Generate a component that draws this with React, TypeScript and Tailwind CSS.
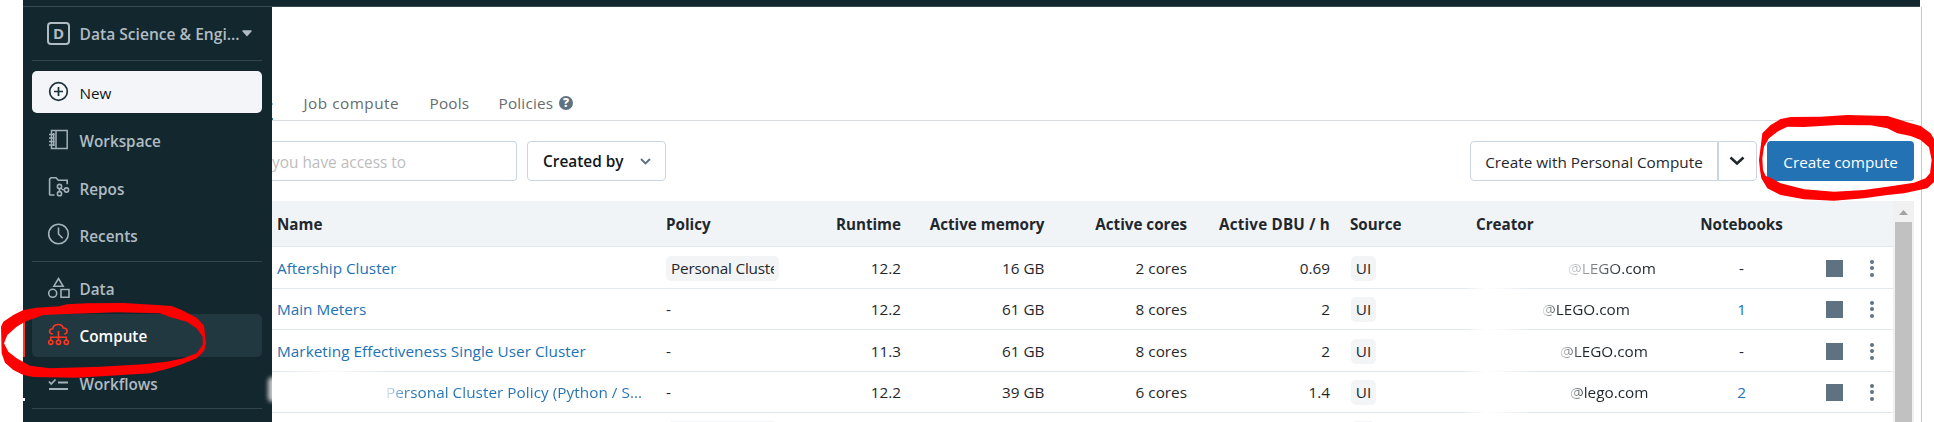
import React from "react";

type Variant = "normal" | "new" | "active";

function NavItem({ label, icon, variant = "normal", className = "" }: { label: string; icon: React.ReactNode; variant?: Variant; className?: string }) {
  const bg = variant === "new" ? "bg-[#f3f5f8]" : variant === "active" ? "bg-[#223840]" : "";
  const ink = variant === "new" ? "text-[#11171c] font-medium" : variant === "active" ? "text-white font-semibold" : "text-[#b0bcc3] font-semibold";
  const iconInk = variant === "new" ? "text-[#1b3139]" : variant === "active" ? "text-[#ff3621]" : "text-[#a3b1b8]";
  return (
    <div className={`mr-[10px] ml-[9px] flex shrink-0 items-center rounded-[5px] pl-[15px] ${bg} ${className}`}>
      <svg className={`h-6 w-6 shrink-0 overflow-visible ${iconInk}`} viewBox="0 0 24 24" fill="none" stroke="currentColor" strokeWidth="1.6">
        {icon}
      </svg>
      <span className={`ml-[8.5px] pt-[3px] text-[15.3px] leading-none whitespace-nowrap ${ink}`}>{label}</span>
    </div>
  );
}

const icons = {
  add: <><circle cx="11.5" cy="11.5" r="8.8" strokeWidth="1.7" /><path d="M11.500 7v9M7 11.500h9" strokeWidth="1.7" /></>,
  workspace: <><path d="M4.500 2.500h15.700v18H4.500zM9 2.500v18M6.700 5v13" strokeWidth="1.500" /><path d="M2 6.500h5.500M2 10h5.500M2 13.500h5.500M2 17h5.500" strokeWidth="1.400" /></>,
  repos: <><path d="M7.500 19H3.200Q2.600 19 2.600 18.400V3.200L4 1.800h5l2.300 2.500h8.900v4" /><circle cx="12.500" cy="10.500" r="2.100" /><circle cx="12.500" cy="17.700" r="2.100" /><circle cx="19.500" cy="14" r="2.100" /><path d="M12.500 12.600v3M14 12c.8 1.600 2 2 3.400 2" /></>,
  recents: <><circle cx="11.500" cy="10" r="9.800" /><path d="M11.500 3.500v6.500l4.200 4.200" /></>,
  data: <><path d="M11.500 1.500l4.600 7.700H6.900z" /><circle cx="5.700" cy="16.300" r="4" /><path d="M14 12.500h8v7.700h-8z" /></>,
  compute: <><path d="M5.800 10C1.200 10 1.800 4.800 5.800 4.800C6.500 -0.700 15 -0.700 16.200 4C21.500 4.300 21 10 17.200 10" /><path d="M11.500 7v9M3.800 16v-2.800h15.500V16" /><circle cx="3.800" cy="18.300" r="2.100" /><circle cx="11.500" cy="18.300" r="2.100" /><circle cx="19.300" cy="18.300" r="2.100" /></>,
  workflows: <path d="M2 9.500l2.200 2.500l4.300-4.500M11 10.500h10M2 17h19" strokeWidth="1.800" />,
};

type Row = { h: string; name: string; nameStyle: string; policy?: string; rt: string; mem: string; cores: string; dbu: string; indent: string; domain: string; fade: string; nb: string };

const link = "text-[#2272b4]";

const rows: Row[] = [
  { h: "h-[42px] pt-px", name: "Aftership Cluster", nameStyle: link, policy: "Personal Cluste", rt: "12.2", mem: "16 GB", cores: "2 cores", dbu: "0.69", indent: "pl-[92px]", domain: "@LEGO.com", fade: "from-[#dcdcde] to-[#1f272d] to-65%", nb: "-" },
  { h: "h-[41px]", name: "Main Meters", nameStyle: link, rt: "12.2", mem: "61 GB", cores: "8 cores", dbu: "2", indent: "pl-[66px]", domain: "@LEGO.com", fade: "from-[#efeff0] to-[#1f272d] to-20%", nb: "1" },
  { h: "h-[42px] pt-px", name: "Marketing Effectiveness Single User Cluster", nameStyle: `${link} tracking-[0.04px]`, rt: "11.3", mem: "61 GB", cores: "8 cores", dbu: "2", indent: "pl-[84px]", domain: "@LEGO.com", fade: "from-[#d8d9db] to-[#1f272d] to-25%", nb: "-" },
  { h: "h-[41px]", name: "Personal Cluster Policy (Python / S...", nameStyle: "ml-[109px] bg-linear-to-r from-[#d9e6f1] to-[#2272b4] to-8% bg-clip-text text-transparent tracking-[0.04px]", rt: "12.2", mem: "39 GB", cores: "6 cores", dbu: "1.4", indent: "pl-[94px]", domain: "@lego.com", fade: "from-[#d0d2d4] to-[#1f272d] to-20%", nb: "2" },
];

const cols = "grid shrink-0 grid-cols-[390px_120px_114px_143.5px_142.5px_143px_20px_126px_200px_131px_60px_70px] whitespace-nowrap";

export default function App() {
  return (
    <div className="relative flex h-[422px] w-[1934px] flex-col overflow-hidden bg-white pl-[23px] font-['Open_Sans','Noto_Sans',sans-serif] text-[15.3px] text-[#1f272d]">
      <div className="h-[7px] w-[1897px] shrink-0 border-b border-[#3a4a52] bg-[#13272e]" />
      <div className="flex min-h-0 flex-1">
        <aside className="relative flex w-[249px] shrink-0 flex-col overflow-hidden bg-[#13272e]">
          <div className="mr-[10px] ml-[9px] flex h-[54px] shrink-0 items-center border-b border-[#34464d] pl-[15px]">
            <div className="mb-[1px] flex h-[23px] w-[23px] shrink-0 items-center justify-center rounded-[4px] border-2 border-[#b0bcc3] text-[15px] leading-none font-bold text-[#b0bcc3]">D</div>
            <span className="ml-[9.5px] w-[159.5px] pt-[3px] text-[15.6px] leading-none font-semibold whitespace-nowrap text-[#b0bcc3]">Data Science &amp; Engi...</span>
            <svg className="mb-[1px] ml-[3px] h-[7px] w-[10px] shrink-0 text-[#b0bcc3]" viewBox="0 0 10 7"><path d="M0.500 0.300h9v1.200L5 6.500L0.500 1.500z" fill="currentColor" /></svg>
          </div>
          <NavItem variant="new" label="New" className="mt-[10px] h-[42px]" icon={icons.add} />
          <NavItem label="Workspace" className="mt-[6px] h-[42px]" icon={icons.workspace} />
          <NavItem label="Repos" className="mt-[6px] h-[42px]" icon={icons.repos} />
          <NavItem label="Recents" className="mt-[5px] h-[43px]" icon={icons.recents} />
          <div className="mr-[10px] ml-[9px] mt-1 h-px shrink-0 bg-[#34464d]" />
          <NavItem label="Data" className="mt-[5px] h-[43px]" icon={icons.data} />
          <NavItem variant="active" label="Compute" className="mt-[4px] h-[43px]" icon={icons.compute} />
          <NavItem label="Workflows" className="mt-[5px] h-[43px]" icon={icons.workflows} />
          <div className="mr-[10px] ml-[9px] mt-[3px] h-px shrink-0 bg-[#34464d]" />
          <div className="absolute top-[307px] left-0 h-[43px] w-[2px] bg-[#ff3621]" />
          <div className="absolute top-[391px] left-0 h-[3px] w-[2px] bg-white" />
          <div className="absolute top-[370px] -right-[5px] h-[25px] w-[9px] rounded-full bg-white/75 blur-[2px]" />
        </aside>

        <main className="flex w-[1650px] shrink-0 flex-col border-r border-[#c8c8c8]">
          <nav className="relative mr-[7px] flex h-[114px] shrink-0 items-end border-b border-[#d8dbdd] pb-[5px] text-[#666b6f]">
            <span className="ml-[31.5px] w-[126px] tracking-[0.5px]">Job compute</span>
            <span className="w-[69px] tracking-[0.2px]">Pools</span>
            <span className="w-[60.5px] tracking-[0.2px]">Policies</span>
            <span className="mb-[5px] flex h-[14px] w-[14px] items-center justify-center rounded-full bg-[#5f7281] text-[12px] leading-none font-extrabold text-white">?</span>
            <i className="absolute bottom-0 left-0 h-[2px] w-px bg-[#2272b4]" />
            <i className="absolute bottom-[15px] left-0 h-[2px] w-px bg-[#8fbbe0]" />
          </nav>

          <div className="mr-[7px] flex h-[80px] shrink-0 items-center">
            <div className="flex h-10 w-[245px] items-center rounded-r-[4px] border border-l-0 border-[#c9d6e1] pt-[3px] text-[15.4px] text-[#bdbdbd]">
              <span className="whitespace-nowrap">you have access to</span>
            </div>
            <button className="ml-[10px] flex h-10 w-[139px] items-center rounded-[4px] border border-[#c9d6e1] pl-[15px] text-[15.4px] font-semibold text-[#11171c]">
              <span className="w-[97px] pt-[2px] text-left whitespace-nowrap">Created by</span>
              <svg className="h-[7px] w-[11px]" viewBox="0 0 11 7" fill="none" stroke="#5f7281" strokeWidth="1.900"><path d="M1 1l4.500 4.500L10 1" /></svg>
            </button>
            <button className="ml-auto flex h-10 w-[248px] items-center justify-center rounded-l-[4px] border border-[#c9d6e1] pt-[3px] whitespace-nowrap">Create with Personal Compute</button>
            <button className="flex h-10 w-[39px] items-center justify-center rounded-r-[4px] border border-[#c9d6e1] pr-[2px]">
              <svg className="h-[10px] w-[16px]" viewBox="0 0 16 10" fill="none" stroke="#1f272d" strokeWidth="2.600"><path d="M1.500 1.500L8 7.500L14.500 1.500" /></svg>
            </button>
            <button className="ml-[10px] flex h-10 w-[147px] items-center justify-center rounded-[4px] bg-[#2272b4] pt-[3px] whitespace-nowrap text-white">Create compute</button>
          </div>

          <div className="mr-[7px] flex min-h-0 flex-1">
            <div className="relative flex w-[1621px] shrink-0 flex-col overflow-hidden">
              <div className={`${cols} h-[46px] items-center border-b border-[#e2e8ed] bg-[#f0f4f7] pt-[2px] pl-[5px] text-[15.2px] font-bold`}>
                <span>Name</span><span className="-ml-px">Policy</span><span className="text-right">Runtime</span><span className="text-right">Active memory</span><span className="text-right">Active cores</span><span className="text-right tracking-[0.2px]">Active DBU / h</span><span /><span>Source</span><span>Creator</span><span className="text-center">Notebooks</span>
              </div>
              {rows.map((r) => (
                <div key={r.name} className={`${cols} ${r.h} items-center border-b border-[#e2e8ed] pl-[5px]`}>
                  <span className={r.nameStyle}>{r.name}</span>
                  {r.policy ? (
                    <span className="-ml-px flex h-[25px] w-[113px] items-center rounded-[5px] bg-[#f3f4f6] px-[5px]"><span className="w-[103px] overflow-hidden tracking-[-0.2px]">{r.policy}</span></span>
                  ) : <span className="-ml-px">-</span>}
                  <span className="text-right">{r.rt}</span>
                  <span className="text-right">{r.mem}</span>
                  <span className="text-right">{r.cores}</span>
                  <span className="text-right">{r.dbu}</span>
                  <span />
                  <span className="ml-px flex h-[25px] w-[25px] items-center justify-center rounded-[5px] bg-[#f3f4f6] pt-px">UI</span>
                  <span className={r.indent}><span className={`bg-linear-to-r bg-clip-text text-transparent ${r.fade}`}>{r.domain}</span></span>
                  <span className={`text-center ${r.nb === "-" ? "" : link}`}>{r.nb}</span>
                  <i className="ml-[19px] h-[17px] w-[17px] bg-[#5f7281]" />
                  <span className="ml-[3px] flex flex-col gap-[2.500px]">
                    <i className="h-1 w-1 rounded-full bg-[#5f7281]" /><i className="h-1 w-1 rounded-full bg-[#5f7281]" /><i className="h-1 w-1 rounded-full bg-[#5f7281]" />
                  </span>
                </div>
              ))}
              <div className="flex shrink-0 pt-[8px]">
                <i className="ml-[396px] h-5 w-[109px] shrink-0 rounded-[5px] bg-[#f3f4f6]" />
                <i className="ml-[575px] h-5 w-[23px] shrink-0 rounded-[5px] bg-[#f3f4f6]" />
              </div>
              <div className="absolute top-[50px] left-[1190px] h-[170px] w-[70px] bg-linear-to-r from-transparent via-white via-35% to-transparent" />
              <div className="absolute top-[165px] left-[10px] h-[12px] w-[100px] bg-linear-to-r from-transparent via-white/80 to-transparent" />
            </div>
            <div className="flex w-[21px] flex-col items-center bg-[#f1f1f1]">
              <svg className="mt-[9px] h-[5px] w-[9px] shrink-0" viewBox="0 0 9 5"><path d="M0 5L4.500 0L9 5z" fill="#a3a3a3" /></svg>
              <i className="mt-[7px] w-[17px] flex-1 bg-[#c1c1c1]" />
            </div>
          </div>
        </main>
      </div>

      <svg className="pointer-events-none absolute inset-0 h-[422px] w-[1934px]" viewBox="0 0 1934 422" fill="#ff0000" fillRule="evenodd">
        <path transform="translate(0 295) scale(.33333)" d="M3 95L10 80L40 60L70 45L110 38L178 34L200 28L260 25L370 24L470 30L515 33L545 45L590 68L612 92L618 145L612 168L590 190L540 210L500 222L450 235L330 242L230 248L100 246L70 240L40 225L15 203L5 175ZM12 145L22 120L50 95L75 80L130 60L200 57L350 52L480 55L510 66L560 80L590 100L608 125L608 150L590 175L550 190L500 200L430 208L300 215L150 220L90 212L50 190L25 170Z" />
        <path transform="translate(1754 110) scale(.33333)" d="M15 150L20 110L25 70L50 45L80 27L110 21L200 20L280 15L400 18L430 27L460 37L500 48L530 70L543 92L543 213L520 235L450 250L400 255L330 265L240 272L150 268L80 255L40 235L22 205L18 180ZM25 145L30 110L45 85L70 65L100 50L150 51L250 45L350 46L400 55L430 70L470 78L500 90L525 112L533 150L528 190L515 205L480 218L400 230L330 240L240 245L150 238L80 220L50 203L35 198L27 180Z" />
      </svg>
    </div>
  );
}
